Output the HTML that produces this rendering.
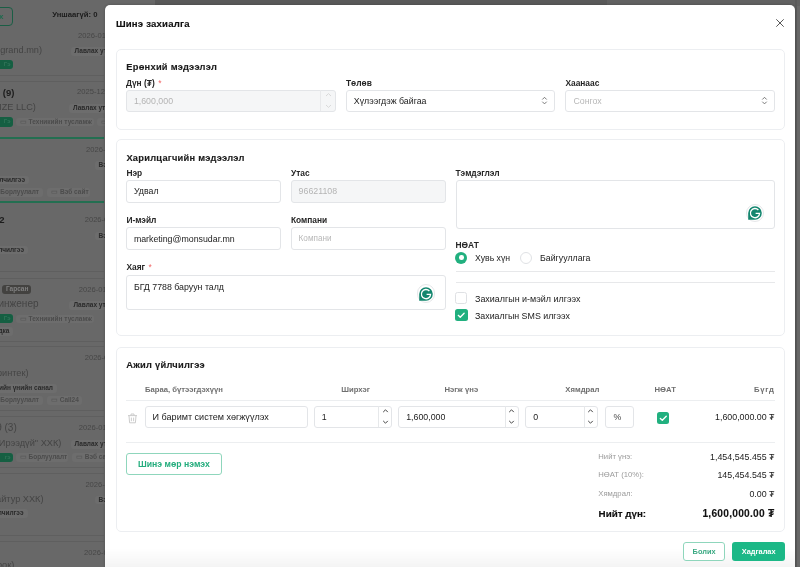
<!DOCTYPE html><html><head><meta charset="utf-8"><style>
*{box-sizing:border-box;margin:0;padding:0}
html,body{width:800px;height:567px;overflow:hidden;background:#fff;font-family:"Liberation Sans",sans-serif;color:#1f1f1f}
.t{position:absolute;line-height:0;white-space:nowrap}
.b{position:absolute}
#page{position:absolute;left:0;top:0;width:800px;height:567px;background:#686868;filter:blur(0.45px)}
#overlay{position:absolute;left:0;top:0;width:800px;height:567px;background:rgba(0,0,0,0.595)}
#modal{position:absolute;left:105.4px;top:4.9px;width:689.8px;height:620px;background:#fff;border-radius:5px;box-shadow:0 0 2px 1px rgba(0,0,0,0.12)}
.card{position:absolute;border:1px solid #eceef1;border-radius:5px;background:#fff}
.inp{position:absolute;border:1px solid #e3e5e8;border-radius:3px;background:#fff;font-size:8.8px;white-space:nowrap;color:#222;display:flex;align-items:center;padding-left:7px}
.lbl{position:absolute;line-height:0;white-space:nowrap;font-size:8.4px;font-weight:700;color:#262626}
.req{color:#f06262;font-weight:400;margin-left:3.5px}
.pg-badge{position:absolute;background:#6d6d6d;border-radius:3px;font-size:6.5px;font-weight:700;color:#4c4c4c;line-height:8.5px;padding:0 4px;white-space:nowrap;overflow:hidden}.pg-badge i{font-style:normal;color:#5a5a5a}.pg-badge.dk{color:#2a2a2a}
.pg-green{position:absolute;background:#155f42;border-radius:3px}
.pg-line{position:absolute;left:0;width:104px;height:1px;background:#5f5f5f}
.pg-gline{position:absolute;left:0;width:104px;height:1.6px;background:#236f51}
.pg-date{position:absolute;line-height:0;font-size:7.6px;color:#474747;white-space:nowrap}
.pg-tx{position:absolute;line-height:0;font-size:9.2px;color:#444;white-space:nowrap}
.pg-bold{position:absolute;line-height:0;font-size:9px;font-weight:700;color:#1c1c1c;white-space:nowrap}
</style></head><body>
<div id="page">
<div class="b" style="left:155px;top:0;width:452px;height:6px;background:#595959"></div>
<div class="b" style="left:607px;top:0;width:193px;height:6px;background:#616161"></div>
<div class="b" style="left:795px;top:0;width:2px;height:567px;background:#5a5a5a"></div>
<div class="b" style="left:-20px;top:7.1px;width:33px;height:18.6px;border:0.8px solid #1b5e45;border-radius:4px"></div>
<div class="t" style="left:-1px;top:16.5px;font-size:8px;font-weight:700;color:#1f6a4e">x</div>
<div class="pg-bold" style="left:52.2px;top:14.8px;font-size:7.7px">Уншаагүй: 0</div>
<div class="pg-line" style="top:74.6px"></div>
<div class="pg-line" style="top:80.5px"></div>
<div class="pg-gline" style="top:137px"></div>
<div class="pg-gline" style="top:201px"></div>
<div class="pg-line" style="top:271.4px"></div>
<div class="pg-line" style="top:277.5px"></div>
<div class="pg-line" style="top:341.4px"></div>
<div class="pg-line" style="top:346.3px"></div>
<div class="pg-line" style="top:410.4px"></div>
<div class="pg-line" style="top:415.6px"></div>
<div class="pg-line" style="top:467.3px"></div>
<div class="pg-line" style="top:473px"></div>
<div class="pg-line" style="top:535px"></div>
<div class="pg-line" style="top:541.3px"></div>
<div class="pg-date" style="left:78px;top:36.4px">2026-01-15</div>
<div class="pg-tx" style="left:-8px;top:50px">argrand.mn)</div>
<div class="pg-badge dk" style="left:70.6px;top:47px">Лавлах утас</div>
<div class="pg-green" style="left:-10px;top:60.2px;width:23px;height:9.3px"><span style="position:absolute;right:2.5px;top:0;line-height:9.3px;font-size:6px;font-weight:700;color:#2f7358">Гэ</span></div>
<div class="pg-bold" style="left:2.8px;top:92.6px;font-size:9.5px">(9)</div>
<div class="pg-date" style="left:77px;top:92.3px">2025-12-30</div>
<div class="pg-tx" style="left:-9px;top:107px">(MZE LLC)</div>
<div class="pg-badge dk" style="left:69px;top:104px">Лавлах утас</div>
<div class="pg-green" style="left:-10px;top:117.3px;width:23px;height:9.3px"><span style="position:absolute;right:2.5px;top:0;line-height:9.3px;font-size:6px;font-weight:700;color:#2f7358">Гэ</span></div>
<div class="pg-badge" style="left:15.8px;top:117.6px;width:78px"><i>▭</i> Техникийн тусламж</div>
<div class="pg-badge" style="left:97.4px;top:117.6px;width:40px"><i>▭</i></div>
<div class="pg-date" style="left:86px;top:150.2px">2026-01</div>
<div class="pg-badge dk" style="left:94.6px;top:161.4px">Вэб</div>
<div class="pg-badge dk" style="right:771.0px;top:175.5px">үйлчилгээ</div>
<div class="pg-badge" style="right:757.0px;top:188px"><i>▭</i> Борлуулалт</div>
<div class="pg-badge" style="left:47.3px;top:188px;width:42.3px"><i>▭</i> Вэб сайт</div>
<div class="pg-bold" style="left:-0.8px;top:219.9px;font-size:9.5px">2</div>
<div class="pg-date" style="left:84.7px;top:220px">2026-01</div>
<div class="pg-badge dk" style="left:94.6px;top:231.7px">Вэб</div>
<div class="pg-badge dk" style="right:772.0px;top:245.5px">үйлчилгээ</div>
<div class="b" style="left:1.7px;top:285px;width:29.6px;height:8.8px;background:#434240;border-radius:3px;font-size:6.5px;font-weight:700;color:#808080;line-height:8.8px;padding-left:4.3px">Гарсан</div>
<div class="pg-date" style="left:78.8px;top:289.6px">2026-01-14</div>
<div class="pg-tx" style="left:-1.5px;top:304.3px;font-size:10px">инженер</div>
<div class="pg-badge dk" style="left:69.4px;top:301px">Лавлах утас</div>
<div class="pg-green" style="left:-10px;top:314.3px;width:23px;height:9.2px"><span style="position:absolute;right:2.5px;top:0;line-height:9.2px;font-size:6px;font-weight:700;color:#2f7358">Гэ</span></div>
<div class="pg-badge" style="left:15.8px;top:314.6px;width:78px"><i>▭</i> Техникийн тусламж</div>
<div class="pg-badge dk" style="right:786.6px;top:327.3px">дка</div>
<div class="pg-date" style="left:84.7px;top:358px">2026-01</div>
<div class="pg-tx" style="left:-5.5px;top:373.3px">финтек)</div>
<div class="pg-badge dk" style="right:743.0px;top:384px">вийн үнийн санал</div>
<div class="pg-badge" style="right:757.0px;top:396px"><i>▭</i> Борлуулалт</div>
<div class="pg-badge" style="left:46.9px;top:396px;width:34.7px"><i>▭</i> Call24</div>
<div class="pg-tx" style="left:-3.8px;top:428px;font-size:10px">9 (3)</div>
<div class="pg-date" style="left:78.8px;top:428px">2026-01-14</div>
<div class="pg-tx" style="left:-9.3px;top:442.6px">а-Ирээдүй" ХХК)</div>
<div class="pg-badge dk" style="left:70.6px;top:440px">Лавлах утас</div>
<div class="pg-green" style="left:-10px;top:452.7px;width:23px;height:8.9px"><span style="position:absolute;right:2.5px;top:0;line-height:8.9px;font-size:6px;font-weight:700;color:#2f7358">гэ</span></div>
<div class="pg-badge" style="left:15.8px;top:453px;width:52.7px"><i>▭</i> Борлуулалт</div>
<div class="pg-badge" style="left:72px;top:453px;width:45px"><i>▭</i> Вэб сайт</div>
<div class="pg-date" style="left:85.4px;top:484.6px">2026-01</div>
<div class="pg-tx" style="left:-8px;top:498.5px">тайтур ХХК)</div>
<div class="pg-badge dk" style="left:94.6px;top:495.7px">Вэб</div>
<div class="pg-badge dk" style="right:772.5px;top:509px">үйлчилгээ</div>
<div class="pg-date" style="left:84px;top:552.6px">2026-01</div>
<div class="pg-tx" style="left:-3px;top:565px">рок)</div>
</div>
<div id="modal"></div>
<div id="content" style="position:absolute;left:0;top:0;width:800px;height:567px;will-change:transform">
<div class="t" style="left:115.9px;top:23.75px;font-size:9.6px;letter-spacing:0.2px;-webkit-text-stroke:0.15px #111;font-weight:700;color:#111">Шинэ захиалга</div>
<svg class="b" style="left:775px;top:18px" width="10" height="10" viewBox="0 0 10 10"><path d="M1.3 1.3 L8.7 8.7 M8.7 1.3 L1.3 8.7" stroke="#444" stroke-width="0.9" fill="none"/></svg>
<div class="card" style="left:115.5px;top:48.8px;width:669.7px;height:81.2px"></div>
<div class="t" style="left:126.3px;top:67.11px;font-size:9.3px;letter-spacing:0.25px;-webkit-text-stroke:0.12px #1a1a1a;font-weight:700;color:#1a1a1a">Ерөнхий мэдээлэл</div>
<div class="lbl" style="left:126px;top:83.24px">Дүн (₮)<span class="req">*</span></div>
<div class="lbl" style="left:346px;top:83.24px">Төлөв</div>
<div class="lbl" style="left:565.4px;top:83.24px">Хаанаас</div>
<div class="inp" style="left:125.9px;top:89.6px;width:209.79999999999998px;height:22.30000000000001px;background:#f5f6f7;color:#b4b4b4;padding-left:7.0px;">1,600,000</div>
<div class="b" style="left:320.3px;top:90.3px;width:1px;height:21px;background:#e8e9eb"></div>
<svg class="b" style="left:325px;top:92px" width="7" height="17" viewBox="0 0 7 17"><path d="M1 4 L3.5 1.6 L6 4 M1 13 L3.5 15.4 L6 13" stroke="#d6d6d6" stroke-width="0.9" fill="none"/></svg>
<div class="inp" style="left:345.8px;top:89.6px;width:209.2px;height:22.30000000000001px;background:#fff;color:#222;padding-left:7.0px;">Хүлээгдэж байгаа</div>
<div class="inp" style="left:565.4px;top:89.6px;width:209.39999999999998px;height:22.30000000000001px;background:#fff;color:#b8b8b8;padding-left:7.0px;">Сонгох</div>
<svg class="b" style="left:540.7px;top:95px" width="7" height="11" viewBox="0 0 7 11"><path d="M1.3 4.5 L3.5 2.3 L5.7 4.5 M1.3 6.7 L3.5 8.9 L5.7 6.7" stroke="#6a6a6a" stroke-width="0.9" fill="none"/></svg>
<svg class="b" style="left:760.5px;top:95px" width="7" height="11" viewBox="0 0 7 11"><path d="M1.3 4.5 L3.5 2.3 L5.7 4.5 M1.3 6.7 L3.5 8.9 L5.7 6.7" stroke="#6a6a6a" stroke-width="0.9" fill="none"/></svg>
<div class="card" style="left:115.5px;top:138.8px;width:669.7px;height:197.2px"></div>
<div class="t" style="left:126.4px;top:158.01px;font-size:9.3px;letter-spacing:0.25px;-webkit-text-stroke:0.12px #1a1a1a;font-weight:700;color:#1a1a1a">Харилцагчийн мэдээлэл</div>
<div class="lbl" style="left:126.4px;top:173.44px">Нэр</div>
<div class="lbl" style="left:291px;top:173.44px">Утас</div>
<div class="lbl" style="left:455.5px;top:173.44px">Тэмдэглэл</div>
<div class="inp" style="left:126px;top:180.2px;width:154.7px;height:22.600000000000023px;background:#fff;color:#222;padding-left:6.9px;">Удвал</div>
<div class="inp" style="left:291px;top:180.2px;width:154.8px;height:22.600000000000023px;background:#f5f6f7;color:#b4b4b4;padding-left:6.6px;">96621108</div>
<div class="lbl" style="left:126.4px;top:220.34px">И-мэйл</div>
<div class="lbl" style="left:291px;top:220.34px">Компани</div>
<div class="inp" style="left:126px;top:227.4px;width:154.7px;height:22.5px;background:#fff;color:#222;padding-left:6.9px;">marketing@monsudar.mn</div>
<div class="inp" style="left:291px;top:227.4px;width:154.8px;height:22.5px;background:#fff;color:#b8b8b8;padding-left:6.6px;font-size:8.2px">Компани</div>
<div class="lbl" style="left:126.4px;top:267.44px">Хаяг<span class="req">*</span></div>
<div class="inp" style="left:126px;top:275.2px;width:319.8px;height:34.400000000000034px;background:#fff;color:#222;padding-left:6.9px;align-items:flex-start;padding-top:6px;line-height:10px">БГД 7788 баруун талд</div>
<div class="inp" style="left:455.5px;top:180.2px;width:319.29999999999995px;height:48.400000000000006px;background:#fff;color:#222;padding-left:7px;"></div>
<div class="b" style="left:745.8px;top:204.10000000000002px;width:18.4px;height:18.4px;border-radius:50%;background:#fff;border:1.2px solid #e6e7e9"></div>
<svg class="b" style="left:748.0px;top:206.3px" width="14" height="14" viewBox="0 0 14 14"><path d="M0.2 13.8 L0.2 7 A6.8 6.8 0 1 1 7 13.8 Z" fill="#13866e"/><path d="M10.4 4.0 A4.6 4.6 0 1 0 11.6 7.3 L7.6 7.3" stroke="#fff" stroke-width="1.3" fill="none"/></svg>
<div class="b" style="left:416.8px;top:284.40000000000003px;width:18.4px;height:18.4px;border-radius:50%;background:#fff;border:1.2px solid #e6e7e9"></div>
<svg class="b" style="left:419.0px;top:286.6px" width="14" height="14" viewBox="0 0 14 14"><path d="M0.2 13.8 L0.2 7 A6.8 6.8 0 1 1 7 13.8 Z" fill="#13866e"/><path d="M10.4 4.0 A4.6 4.6 0 1 0 11.6 7.3 L7.6 7.3" stroke="#fff" stroke-width="1.3" fill="none"/></svg>
<div class="lbl" style="left:455.5px;top:244.54px">НӨАТ</div>
<div class="b" style="left:455.3px;top:251.6px;width:12.2px;height:12.2px;border-radius:50%;background:#21b07f"></div>
<div class="b" style="left:459.1px;top:255.4px;width:4.6px;height:4.6px;border-radius:50%;background:#fff"></div>
<div class="t" style="left:475.1px;top:258px;font-size:8.7px;color:#222">Хувь хүн</div>
<div class="b" style="left:519.9px;top:251.6px;width:12.4px;height:12.4px;border-radius:50%;background:#fff;border:1px solid #e0e2e5"></div>
<div class="t" style="left:540px;top:258px;font-size:8.8px;color:#222">Байгууллага</div>
<div class="b" style="left:455.5px;top:271px;width:319.3px;height:1px;background:#e7e8ea"></div>
<div class="b" style="left:455.5px;top:281.5px;width:319.3px;height:1px;background:#e7e8ea"></div>
<div class="b" style="left:455.3px;top:292px;width:12.2px;height:12.3px;border-radius:2.5px;background:#fff;border:1px solid #dfe1e4"></div>
<div class="t" style="left:475px;top:298.9px;font-size:8.95px;color:#222">Захиалгын и-мэйл илгээх</div>
<div class="b" style="left:455.3px;top:309.2px;width:12.3px;height:12.3px;border-radius:2.5px;background:#21b07f"></div>
<svg class="b" style="left:455.3px;top:309.2px" width="12.3" height="12.3" viewBox="0 0 12 12"><path d="M3.2 6.2 L5.1 8.0 L8.9 4.1" stroke="#fff" stroke-width="1.3" fill="none" stroke-linecap="round" stroke-linejoin="round"/></svg>
<div class="t" style="left:475px;top:316px;font-size:8.85px;color:#222">Захиалгын SMS илгээх</div>
<div class="card" style="left:115.5px;top:346.6px;width:669.7px;height:185.0px"></div>
<div class="t" style="left:126.25px;top:365.31px;font-size:9.3px;letter-spacing:0.25px;-webkit-text-stroke:0.12px #1a1a1a;font-weight:700;color:#1a1a1a">Ажил үйлчилгээ</div>
<div class="t" style="left:145px;top:389.6px;font-size:7.7px;font-weight:700;color:#6f6f6f">Бараа, бүтээгдэхүүн</div>
<div class="t" style="left:355.6px;top:389.6px;font-size:7.7px;font-weight:700;color:#6f6f6f;transform:translateX(-50%)">Ширхэг</div>
<div class="t" style="left:461.25px;top:389.6px;font-size:7.7px;font-weight:700;color:#6f6f6f;transform:translateX(-50%)">Нэгж үнэ</div>
<div class="t" style="left:582.4px;top:389.6px;font-size:7.7px;font-weight:700;color:#6f6f6f;transform:translateX(-50%)">Хямдрал</div>
<div class="t" style="left:665.25px;top:389.6px;font-size:7.7px;font-weight:700;color:#6f6f6f;transform:translateX(-50%)">НӨАТ</div>
<div class="t" style="right:25.5px;top:389.6px;font-size:7.7px;font-weight:700;color:#6f6f6f;letter-spacing:0.7px;padding-right:0">Бүгд</div>
<div class="b" style="left:126px;top:400px;width:648.8px;height:1px;background:#eceef0"></div>
<svg class="b" style="left:127px;top:412px" width="11" height="12" viewBox="0 0 11 12"><path d="M1 3.6 H10 M4 3.4 V2 H7 V3.4 M2 3.8 L2.6 10.8 H8.4 L9 3.8 M4.4 5.6 V9.2 M6.6 5.6 V9.2" stroke="#c6c6c6" stroke-width="0.9" fill="none"/></svg>
<div class="inp" style="left:144.7px;top:405.5px;width:163.40000000000003px;height:22.30000000000001px;background:#fff;color:#222;padding-left:6.9px;font-size:9.05px">И баримт систем хөгжүүлэх</div>
<div class="inp" style="left:313.6px;top:405.5px;width:78.89999999999998px;height:22.30000000000001px;background:#fff;color:#222;padding-left:7.2px;">1</div>
<div class="b" style="left:378px;top:406.2px;width:1px;height:20.8px;background:#e6e8ea"></div>
<svg class="b" style="left:381.75px;top:407px" width="7" height="19" viewBox="0 0 7 19"><path d="M1.2 5.1 L3.5 2.8 L5.8 5.1 M1.2 13.9 L3.5 16.2 L5.8 13.9" stroke="#444" stroke-width="1" fill="none"/></svg>
<div class="inp" style="left:398px;top:405.5px;width:121.20000000000005px;height:22.30000000000001px;background:#fff;color:#222;padding-left:7.2px;">1,600,000</div>
<div class="b" style="left:504.5px;top:406.2px;width:1px;height:20.8px;background:#e6e8ea"></div>
<svg class="b" style="left:508.35px;top:407px" width="7" height="19" viewBox="0 0 7 19"><path d="M1.2 5.1 L3.5 2.8 L5.8 5.1 M1.2 13.9 L3.5 16.2 L5.8 13.9" stroke="#444" stroke-width="1" fill="none"/></svg>
<div class="inp" style="left:525px;top:405.5px;width:73.20000000000005px;height:22.30000000000001px;background:#fff;color:#222;padding-left:7.2px;">0</div>
<div class="b" style="left:583.7px;top:406.2px;width:1px;height:20.8px;background:#e6e8ea"></div>
<svg class="b" style="left:587.45px;top:407px" width="7" height="19" viewBox="0 0 7 19"><path d="M1.2 5.1 L3.5 2.8 L5.8 5.1 M1.2 13.9 L3.5 16.2 L5.8 13.9" stroke="#444" stroke-width="1" fill="none"/></svg>
<div class="inp" style="left:604.8px;top:405.5px;width:29.700000000000045px;height:22.30000000000001px;background:#fff;color:#4a4a4a;padding-left:7.6px;">%</div>
<div class="b" style="left:656.8px;top:411.8px;width:12.5px;height:12.5px;border-radius:2.5px;background:#21b07f"></div>
<svg class="b" style="left:656.8px;top:411.8px" width="12.5" height="12.5" viewBox="0 0 12 12"><path d="M3.2 6.2 L5.1 8.0 L8.9 4.1" stroke="#fff" stroke-width="1.3" fill="none" stroke-linecap="round" stroke-linejoin="round"/></svg>
<div class="t" style="right:25.5px;top:417px;font-size:8.85px;color:#222">1,600,000.00 ₮</div>
<div class="b" style="left:126px;top:442.3px;width:648.8px;height:1px;background:#eceef0"></div>
<div class="b" style="left:126px;top:453px;width:95.7px;height:21.6px;border:1px solid #8fd6bc;border-radius:3px;font-size:8.7px;font-weight:700;color:#22ac7c;display:flex;align-items:center;justify-content:center;white-space:nowrap">Шинэ мөр нэмэх</div>
<div class="t" style="left:598.3px;top:457.3px;font-size:7.7px;color:#9b9b9b">Нийт үнэ:</div>
<div class="t" style="right:25.5px;top:457.3px;font-size:8.85px;color:#222">1,454,545.455 ₮</div>
<div class="t" style="left:598.3px;top:475.4px;font-size:7.7px;color:#9b9b9b">НӨАТ (10%):</div>
<div class="t" style="right:25.5px;top:475.4px;font-size:8.85px;color:#222">145,454.545 ₮</div>
<div class="t" style="left:598.3px;top:493.8px;font-size:7.7px;color:#9b9b9b">Хямдрал:</div>
<div class="t" style="right:25.5px;top:493.8px;font-size:8.85px;color:#222">0.00 ₮</div>
<div class="t" style="left:598.6px;top:513.6px;font-size:9.8px;font-weight:700;-webkit-text-stroke:0.15px #111;color:#111">Нийт дүн:</div>
<div class="t" style="right:25.5px;top:513.6px;font-size:10.2px;letter-spacing:0.25px;-webkit-text-stroke:0.1px #111;font-weight:700;color:#111">1,600,000.00 ₮</div>
<div class="b" style="left:105.4px;top:548px;width:689.8px;height:19px;background:linear-gradient(rgba(0,0,0,0),rgba(0,0,0,0.045))"></div>
<div class="b" style="left:683.2px;top:541.7px;width:41.8px;height:18.9px;border:1px solid #8fd6bc;border-radius:3px;background:#fff;font-size:7.4px;font-weight:700;color:#3aa982;display:flex;align-items:center;justify-content:center">Болих</div>
<div class="b" style="left:731.8px;top:541.7px;width:53.7px;height:18.9px;border-radius:3px;background:#1cb887;font-size:7.4px;font-weight:700;color:#fff;display:flex;align-items:center;justify-content:center">Хадгалах</div>
</div>
</body></html>
